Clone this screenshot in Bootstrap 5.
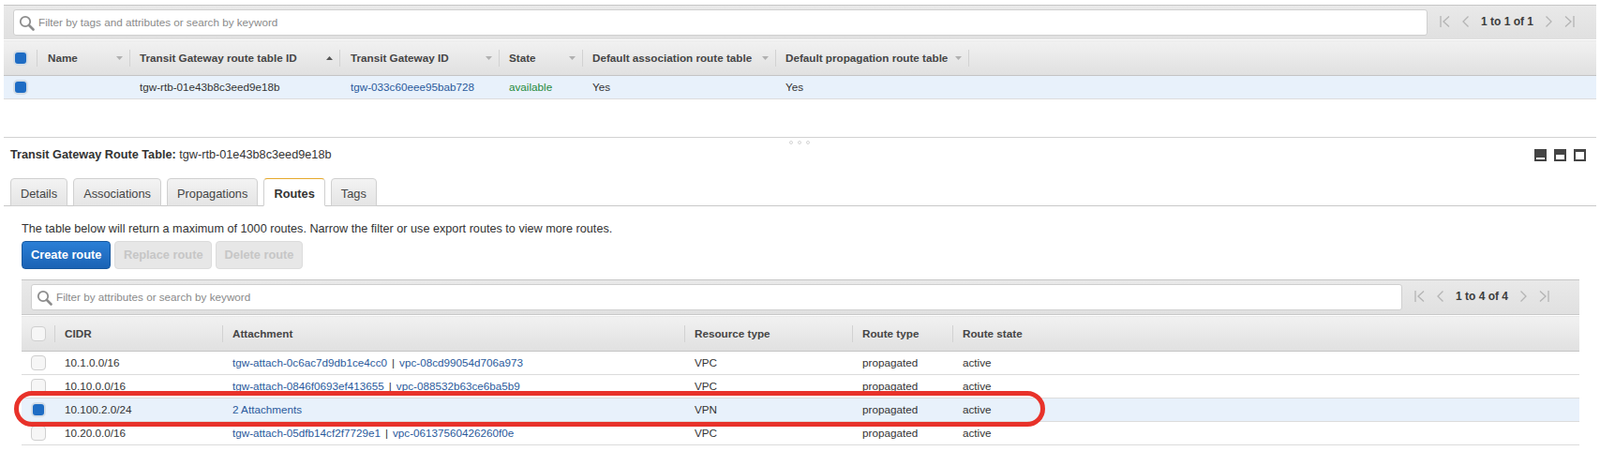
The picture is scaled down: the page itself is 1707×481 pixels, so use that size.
<!DOCTYPE html>
<html lang="en">
<head>
  <meta charset="UTF-8" />
  <meta name="viewport" content="width=device-width, initial-scale=1.0" />
  <title>Transit Gateway Route Tables</title>
  <link href="https://cdn.jsdelivr.net/npm/bootstrap@5.3.0/dist/css/bootstrap.min.css" rel="stylesheet">
  <style>
    body {
      background: #fff;
      color: #333;
      font-family: "Liberation Sans", Arial, sans-serif;
      font-size: 11.7px;
      line-height: 16px;
      height: 481px;
      overflow: hidden;
    }
    a { color: #2a5a9c; text-decoration: none; }
    .console-page { position: relative; padding: 5px 4px 0; }

    .filter-bar {
      height: 38px;
      padding: 4px 0 0 10px;
      border-top: 1px solid #c6c6c6;
      border-bottom: 1px solid #c9c9c9;
      background: linear-gradient(#e9e9e9, #e0e0e0);
    }
    .filter-box {
      height: 28px;
      padding-left: 5px;
      background: #fff;
      border: 1px solid #cfcfcf;
      border-radius: 3px;
      color: #8a8a8a;
    }
    .filter-top .filter-box { width: 1509px; }
    .filter-low .filter-box { width: 1463px; }
    .pager { height: 26px; margin-left: 13px; }
    .pager-text { color: #3c3c3c; font-size: 12px; font-weight: 700; margin: 0 13px; white-space: nowrap; }
    .pager svg { display: block; }
    .pager-gap { margin-left: 13px; }

    .grid-table { table-layout: fixed; width: 100%; margin: 0; color: #333; font-size: 11.7px; }
    .grid-table th {
      height: 38px;
      padding: 0 0 0 10px;
      vertical-align: middle;
      color: #454545;
      font-weight: 700;
      background: linear-gradient(#f1f1f1, #e0e0e0);
      border-top: 1px solid #fff;
      border-bottom: 1px solid #c4c4c4;
      white-space: nowrap;
    }
    .grid-table th.head-sep {
      background: linear-gradient(#d2d2d2, #d2d2d2) right center / 1px 18px no-repeat, linear-gradient(#f1f1f1, #e0e0e0);
    }
    .grid-table td {
      height: 25px;
      padding: 0 0 0 10px;
      vertical-align: middle;
      background: #fff;
      border-bottom: 1px solid #dcdcdc;
      white-space: nowrap;
    }
    .grid-table tr.picked td { background: #e8f1fb; }
    .grid-table .shift-col { padding-left: 11px; }
    .head-cell { display: flex; align-items: center; justify-content: space-between; height: 25px; }
    .sort-mark { margin-right: 8px; flex: none; }
    .pipe-sep { margin: 0 5px; color: #333; }
    .state-ok { color: #1f8a3b; }

    .tick {
      display: block;
      width: 16px;
      height: 16px;
      margin: 0;
      appearance: none;
      border: 1px solid #cfcfcf;
      border-radius: 4px;
      background: #f6f6f6;
    }
    .tick:checked { border: 2px solid #d4dde6; border-radius: 5px; background: #1e6cc4; }

    .top-table .c1 { width: 36px; } .top-table .c2 { width: 99px; } .top-table .c3 { width: 224px; }
    .top-table .c4 { width: 170px; } .top-table .c5 { width: 89px; } .top-table .c6 { width: 206px; }
    .top-table .c7 { width: 206px; }
    .low-table .c1 { width: 36px; } .low-table .c2 { width: 179px; } .low-table .c3 { width: 493px; }
    .low-table .c4 { width: 179px; } .low-table .c5 { width: 107px; }

    .top-table { margin-top: -1px; }
    .detail-head {
      margin-top: 40px;
      height: 44px;
      padding: 10px 11px 0 7px;
      font-size: 12.7px;
      border-top: 1px solid #d2d2d2;
    }
    .grip { position: absolute; left: 842px; top: 150px; display: flex; gap: 5px; }
    .grip span { width: 4px; height: 4px; border: 1px solid #d6d6d6; border-radius: 50%; }
    .size-icons { gap: 8px; margin-top: 2px; }
    .size-icons svg { display: block; }

    .detail-tabs { padding-left: 7px; gap: 6px; border-bottom: 1px solid #c8c8c8; height: 30px; }
    .detail-tabs .nav-link {
      height: 30px;
      padding: 8px 10px 0;
      color: #454545;
      font-size: 12.8px;
      background: linear-gradient(#f3f3f3, #e5e5e5);
      border: 1px solid #d0d0d0;
      border-radius: 4px 4px 0 0;
      margin: 0;
    }
    .detail-tabs .nav-link.active {
      color: #333;
      font-weight: 700;
      background: #fff;
      border-color: #d0d0d0 #d0d0d0 #fff;
      border-top: 1px solid #e6a92c;
    }
    .routes-pane { padding: 16px 18px 0 19px; }
    .routes-note { font-size: 12.66px; color: #333; height: 16px; }
    .action-row { gap: 4px; margin-top: 5px; margin-bottom: 11px; }
    .action-btn {
      height: 30px;
      padding: 0 9px;
      font-size: 12.8px;
      font-weight: 700;
      line-height: 28px;
      border-radius: 4px;
    }
    .btn-primary.action-btn {
      background: linear-gradient(#2b7fd6, #1a62b4);
      border: 1px solid #17589f;
      color: #fff;
    }
    .btn-secondary.action-btn, .btn-secondary.action-btn:disabled {
      padding: 0 8.5px;
      background: #e7e7e7;
      border: 1px solid #dcdcdc;
      color: #c6c6c6;
      opacity: 1;
    }

    .route-ring {
      position: absolute;
      left: 15px;
      top: 417px;
      width: 1100px;
      height: 38px;
      border: 5px solid #e8322a;
      border-radius: 19px;
      pointer-events: none;
    }
  </style>
</head>
<body>

<div class="console-page">

  <div class="filter-bar filter-top d-flex align-items-start">
    <div class="filter-box d-flex align-items-center gap-1">
      <svg width="17" height="17" viewBox="0 0 17 17" fill="none" stroke="#8d8d8d"><circle cx="7" cy="7" r="5.2" stroke-width="1.8"/><path d="M11 11l4.5 4.5" stroke-width="2.6" stroke-linecap="round"/></svg>
      <span>Filter by tags and attributes or search by keyword</span>
    </div>
    <div class="pager d-flex align-items-center">
      <svg width="11" height="12" viewBox="0 0 11 12" fill="none" stroke="#b4b4b4" stroke-width="1.3"><path d="M1 0v12M10 .5L4 6l6 5.5"/></svg>
      <svg class="pager-gap" width="7" height="12" viewBox="0 0 7 12" fill="none" stroke="#b4b4b4" stroke-width="1.3"><path d="M6.500 .5L1 6l5.500 5.500"/></svg>
      <span class="pager-text">1 to 1 of 1</span>
      <svg width="7" height="12" viewBox="0 0 7 12" fill="none" stroke="#b4b4b4" stroke-width="1.3"><path d="M.5 .5L6 6 .5 11.500"/></svg>
      <svg class="pager-gap" width="11" height="12" viewBox="0 0 11 12" fill="none" stroke="#b4b4b4" stroke-width="1.3"><path d="M1 .5L7 6l-6 5.500M10 0v12"/></svg>
    </div>
  </div>

  <table class="table grid-table top-table">
    <colgroup><col class="c1"><col class="c2"><col class="c3"><col class="c4"><col class="c5"><col class="c6"><col class="c7"><col></colgroup>
    <thead>
      <tr>
        <th class="head-sep"><input class="tick" type="checkbox" checked></th>
        <th class="head-sep shift-col"><div class="head-cell">Name<svg class="sort-mark" width="7" height="4"><path d="M0 0h7L3.500 4z" fill="#b0b0b0"/></svg></div></th>
        <th class="head-sep"><div class="head-cell">Transit Gateway route table ID<svg class="sort-mark" width="7" height="4"><path d="M0 4h7L3.500 0z" fill="#555"/></svg></div></th>
        <th class="head-sep shift-col"><div class="head-cell">Transit Gateway ID<svg class="sort-mark" width="7" height="4"><path d="M0 0h7L3.500 4z" fill="#b0b0b0"/></svg></div></th>
        <th class="head-sep"><div class="head-cell">State<svg class="sort-mark" width="7" height="4"><path d="M0 0h7L3.500 4z" fill="#b0b0b0"/></svg></div></th>
        <th class="head-sep"><div class="head-cell">Default association route table<svg class="sort-mark" width="7" height="4"><path d="M0 0h7L3.500 4z" fill="#b0b0b0"/></svg></div></th>
        <th class="head-sep"><div class="head-cell">Default propagation route table<svg class="sort-mark" width="7" height="4"><path d="M0 0h7L3.500 4z" fill="#b0b0b0"/></svg></div></th>
        <th></th>
      </tr>
    </thead>
    <tbody>
      <tr class="picked">
        <td><input class="tick" type="checkbox" checked></td>
        <td></td>
        <td>tgw-rtb-01e43b8c3eed9e18b</td>
        <td class="shift-col"><a href="#">tgw-033c60eee95bab728</a></td>
        <td><span class="state-ok">available</span></td>
        <td>Yes</td>
        <td>Yes</td>
        <td></td>
      </tr>
    </tbody>
  </table>

  <div class="detail-head d-flex justify-content-between align-items-start">
    <div><strong>Transit Gateway Route Table:</strong> tgw-rtb-01e43b8c3eed9e18b</div>
    <div class="size-icons d-flex">
      <svg width="13" height="13"><rect width="13" height="13" fill="#444"/><rect x="2" y="9" width="9" height="2" fill="#fff"/></svg>
      <svg width="13" height="13"><rect width="13" height="13" fill="#444"/><rect x="2" y="6" width="9" height="5" fill="#fff"/></svg>
      <svg width="13" height="13"><rect width="13" height="13" fill="#444"/><rect x="2" y="3" width="9" height="8" fill="#fff"/></svg>
    </div>
  </div>
  <div class="grip"><span></span><span></span><span></span></div>

  <ul class="nav nav-tabs detail-tabs">
    <li class="nav-item"><a class="nav-link" href="#">Details</a></li>
    <li class="nav-item"><a class="nav-link" href="#">Associations</a></li>
    <li class="nav-item"><a class="nav-link" href="#">Propagations</a></li>
    <li class="nav-item"><a class="nav-link active" href="#">Routes</a></li>
    <li class="nav-item"><a class="nav-link" href="#">Tags</a></li>
  </ul>

  <div class="routes-pane">
    <div class="routes-note">The table below will return a maximum of 1000 routes. Narrow the filter or use export routes to view more routes.</div>
    <div class="action-row d-flex">
      <button class="btn btn-primary action-btn" type="button">Create route</button>
      <button class="btn btn-secondary action-btn" type="button" disabled>Replace route</button>
      <button class="btn btn-secondary action-btn" type="button" disabled>Delete route</button>
    </div>

    <div class="filter-bar filter-low d-flex align-items-start">
      <div class="filter-box d-flex align-items-center gap-1">
        <svg width="17" height="17" viewBox="0 0 17 17" fill="none" stroke="#8d8d8d"><circle cx="7" cy="7" r="5.2" stroke-width="1.8"/><path d="M11 11l4.5 4.5" stroke-width="2.6" stroke-linecap="round"/></svg>
        <span>Filter by attributes or search by keyword</span>
      </div>
      <div class="pager d-flex align-items-center">
        <svg width="11" height="12" viewBox="0 0 11 12" fill="none" stroke="#b4b4b4" stroke-width="1.3"><path d="M1 0v12M10 .5L4 6l6 5.5"/></svg>
        <svg class="pager-gap" width="7" height="12" viewBox="0 0 7 12" fill="none" stroke="#b4b4b4" stroke-width="1.3"><path d="M6.500 .5L1 6l5.500 5.500"/></svg>
        <span class="pager-text">1 to 4 of 4</span>
        <svg width="7" height="12" viewBox="0 0 7 12" fill="none" stroke="#b4b4b4" stroke-width="1.3"><path d="M.5 .5L6 6 .5 11.500"/></svg>
        <svg class="pager-gap" width="11" height="12" viewBox="0 0 11 12" fill="none" stroke="#b4b4b4" stroke-width="1.3"><path d="M1 .5L7 6l-6 5.500M10 0v12"/></svg>
      </div>
    </div>

    <table class="table grid-table low-table">
      <colgroup><col class="c1"><col class="c2"><col class="c3"><col class="c4"><col class="c5"><col></colgroup>
      <thead>
        <tr>
          <th class="head-sep"><input class="tick" type="checkbox"></th>
          <th class="head-sep">CIDR</th>
          <th class="head-sep">Attachment</th>
          <th class="head-sep">Resource type</th>
          <th class="head-sep">Route type</th>
          <th>Route state</th>
        </tr>
      </thead>
      <tbody>
        <tr>
          <td><input class="tick" type="checkbox"></td>
          <td>10.1.0.0/16</td>
          <td><a href="#">tgw-attach-0c6ac7d9db1ce4cc0</a><span class="pipe-sep">|</span><a href="#">vpc-08cd99054d706a973</a></td>
          <td>VPC</td><td>propagated</td><td>active</td>
        </tr>
        <tr>
          <td><input class="tick" type="checkbox"></td>
          <td>10.10.0.0/16</td>
          <td><a href="#">tgw-attach-0846f0693ef413655</a><span class="pipe-sep">|</span><a href="#">vpc-088532b63ce6ba5b9</a></td>
          <td>VPC</td><td>propagated</td><td>active</td>
        </tr>
        <tr class="picked">
          <td><input class="tick" type="checkbox" checked></td>
          <td>10.100.2.0/24</td>
          <td><a href="#">2 Attachments</a></td>
          <td>VPN</td><td>propagated</td><td>active</td>
        </tr>
        <tr>
          <td><input class="tick" type="checkbox"></td>
          <td>10.20.0.0/16</td>
          <td><a href="#">tgw-attach-05dfb14cf2f7729e1</a><span class="pipe-sep">|</span><a href="#">vpc-06137560426260f0e</a></td>
          <td>VPC</td><td>propagated</td><td>active</td>
        </tr>
      </tbody>
    </table>
  </div>

  <div class="route-ring"></div>
</div>

<script src="https://cdn.jsdelivr.net/npm/bootstrap@5.3.0/dist/js/bootstrap.bundle.min.js"></script>
</body>
</html>
